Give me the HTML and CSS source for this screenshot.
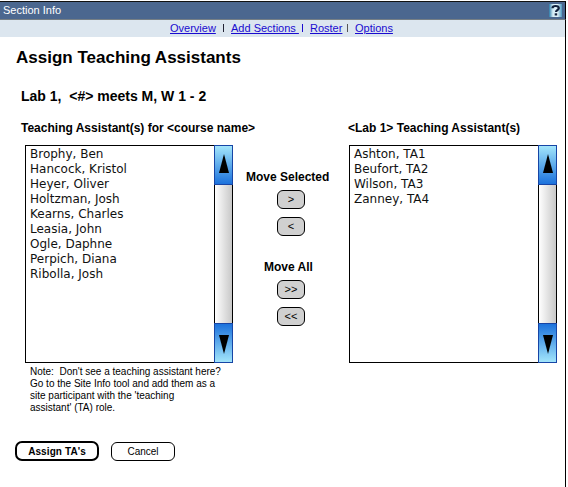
FILE: index.html
```html
<!DOCTYPE html>
<html lang="en">
<head>
<meta charset="utf-8">
<title>Section Info</title>
<link rel="stylesheet" href="styles.css">
</head>
<body>
<div class="page">
  <header class="bar">
    <span class="bar-title">Section Info</span>
    <svg class="help" width="13" height="13" viewBox="0 0 13 13">
      <defs><linearGradient id="hg" x1="0" y1="0" x2="1" y2="0"><stop offset="0" stop-color="#2b7aa8"/><stop offset=".3" stop-color="#d4ecf6"/><stop offset=".65" stop-color="#e4f4fa"/><stop offset="1" stop-color="#4b96bd"/></linearGradient></defs>
      <rect width="13" height="13" fill="url(#hg)"/>
      <path d="M3.500 4.200C3.500 2.600 4.800 2 6.600 2s3.200.8 3.200 2.300C9.800 6 7 6 7 8" fill="none" stroke="#10203c" stroke-width="2.200"/>
      <rect x="5.700" y="9.300" width="2.500" height="2.200" fill="#10203c"/>
    </svg>
  </header>
  <nav class="nav">
    <a class="overview" href="#">Overview</a><i class="sep s1"></i><a class="add" href="#">Add Sections&nbsp;</a><i class="sep s2"></i><a class="roster" href="#">Roster</a><i class="sep s3"></i><a class="options" href="#">Options</a>
  </nav>
  <main class="main">
    <h1>Assign Teaching Assistants</h1>
    <h2>Lab 1,&nbsp; &lt;#&gt; meets M, W 1 - 2</h2>
    <div class="columns">
      <section class="left">
        <h3 class="label-left">Teaching Assistant(s) for &lt;course name&gt;</h3>
        <div class="listbox">
          <ul><li>Brophy, Ben</li><li>Hancock, Kristol</li><li>Heyer, Oliver</li><li>Holtzman, Josh</li><li>Kearns, Charles</li><li>Leasia, John</li><li>Ogle, Daphne</li><li>Perpich, Diana</li><li>Ribolla, Josh</li></ul>
          <div class="scroll">
            <div class="up"><svg width="10" height="19" viewBox="0 0 10 19"><path d="M5 0L10 19H0Z"/></svg></div>
            <div class="track"></div>
            <div class="down"><svg width="10" height="19" viewBox="0 0 10 19"><path d="M0 0H10L5 19Z"/></svg></div>
          </div>
        </div>
        <p class="note">Note:&nbsp; Don't see a teaching assistant here?<br>Go to the Site Info tool and add them as a<br>site participant with the 'teaching<br>assistant' (TA) role.</p>
      </section>
      <section class="moves">
        <h3>Move Selected</h3>
        <button class="mv">&gt;</button>
        <button class="mv">&lt;</button>
        <h3 class="all">Move All</h3>
        <button class="mv">&gt;&gt;</button>
        <button class="mv">&lt;&lt;</button>
      </section>
      <section class="right">
        <h3 class="label-right">&lt;Lab 1&gt; Teaching Assistant(s)</h3>
        <div class="listbox">
          <ul><li>Ashton, TA1</li><li>Beufort, TA2</li><li>Wilson, TA3</li><li>Zanney, TA4</li></ul>
          <div class="scroll">
            <div class="up"><svg width="10" height="19" viewBox="0 0 10 19"><path d="M5 0L10 19H0Z"/></svg></div>
            <div class="track"></div>
            <div class="down"><svg width="10" height="19" viewBox="0 0 10 19"><path d="M0 0H10L5 19Z"/></svg></div>
          </div>
        </div>
      </section>
    </div>
    <div class="actions">
      <button class="assign">Assign TA's</button>
      <button class="cancel">Cancel</button>
    </div>
  </main>
</div>
</body>
</html>
```
FILE: styles.css
```css
* { box-sizing: border-box; margin: 0; padding: 0; }
body { background: #fff; color: #000; font-family: "Liberation Sans", Arial, sans-serif; overflow: hidden; }
.page { width: 566px; height: 487px; padding-top: 1px; }
.bar { height: 19px; background: #4b678f; border-top: 1px solid #111; border-bottom: 1px solid #767f85; display: flex; justify-content: space-between; align-items: center; padding: 0 3px 0 3px; border-right: 1px solid #000; }
.bar-title { color: #fff; font-size: 11px; line-height: 16px; margin-top: -1px; }
.help { display: block; }
.nav { height: 17px; background: #dce6ef; border-right: 1px solid #000; display: flex; padding-left: 170px; font-size: 11px; line-height: 17px; white-space: pre; }
.nav a { color: #1a0bd0; text-decoration: underline; }
.sep { width: 1px; height: 8px; background: #223; margin-top: 4px; }
.overview { width: 53px; }
.s1 { margin-right: 7px; }
.add { width: 71px; }
.s2 { margin-right: 7px; background: #1a0bd0; }
.roster { width: 37px; }
.s3 { margin-right: 7px; background: #555; }
.main { height: 450px; border-right: 1px solid #000; padding: 10px 0 0 16px; white-space: nowrap; }
h1 { font-size: 17px; line-height: 22px; }
h2 { font-size: 14px; line-height: 18px; margin: 18px 0 0 5px; }
h3 { font-size: 12px; line-height: 14px; }
.columns { display: flex; margin-top: 16px; height: 294px; }
.left { width: 219px; padding-left: 5px; }
.left .listbox, .note { margin-left: 4px; }
.listbox { width: 208px; height: 218px; margin-top: 10px; border: 1px solid #000; border-right: 0; display: flex; }
ul { flex: 1; list-style: none; padding: 1px 0 0 4px; font-family: "DejaVu Sans", Verdana, sans-serif; font-size: 12px; line-height: 15px; color: #111; }
.scroll { width: 19px; display: flex; flex-direction: column; margin: -1px 0; }
.up, .down { height: 40px; border: 1px solid #1745a5; display: flex; justify-content: center; }
.up { background: linear-gradient(#a2e5fb, #1c72dc); padding-top: 8px; }
.down { background: linear-gradient(#1c72dc, #a2e5fb); padding-top: 11px; }
.track { flex: 1; border: 1px solid #000; border-width: 0 1px; background: linear-gradient(90deg, #fff, #c8c8c8); }
.note { font-size: 10px; line-height: 12px; margin-top: 3px; padding-left: 5px; }
.moves { width: 113px; padding: 49px 0 0 11px; display: flex; flex-direction: column; align-items: flex-start; }
.moves h3 { margin-bottom: 6px; }
.moves .all { margin: 16px 0 6px 18px; }
button { font-family: inherit; color: #000; white-space: nowrap; }
.mv { width: 28px; height: 19px; margin: 0 0 8px 31px; border: 1px solid #000; border-radius: 6px; background: #d0d0d0; font-size: 11px; line-height: 17px; }
.right .listbox { margin-left: 1px; }
.actions { display: flex; margin-top: 26px; margin-left: -1px; align-items: center; }
.assign { width: 84px; height: 20px; border: 2px solid #000; border-radius: 7px; background: #fff; font-size: 10px; font-weight: bold; line-height: 15px; padding-top: 1px; letter-spacing: .1px; }
.cancel { width: 64px; height: 19px; margin-left: 12px; border: 1px solid #000; border-radius: 6px; background: #fff; font-size: 10px; line-height: 17px; }
```
